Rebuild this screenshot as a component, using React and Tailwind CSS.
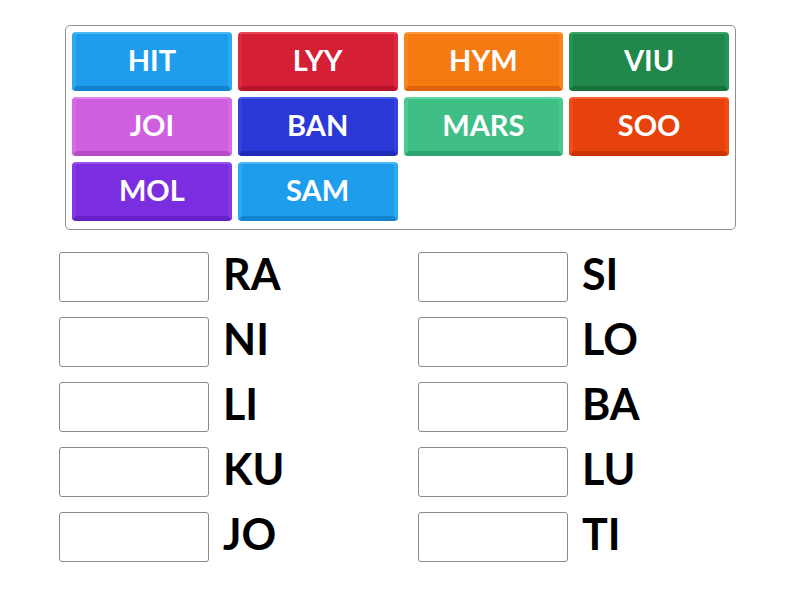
import React from "react";

const tiles = [
  { label: "HIT", face: "bg-[#1f9ded]", top: "border-t-[#4bb8f5]", side: "border-x-[#2aa8f2]", bottom: "border-b-[#1283cf]" },
  { label: "LYY", face: "bg-[#d41f34]", top: "border-t-[#e8475a]", side: "border-x-[#dc2a3e]", bottom: "border-b-[#b5142a]" },
  { label: "HYM", face: "bg-[#f57a12]", top: "border-t-[#fb9a3c]", side: "border-x-[#f7861f]", bottom: "border-b-[#dc640a]" },
  { label: "VIU", face: "bg-[#20884a]", top: "border-t-[#3aa565]", side: "border-x-[#269455]", bottom: "border-b-[#17733c]" },
  { label: "JOI", face: "bg-[#cf5fdf]", top: "border-t-[#e583f2]", side: "border-x-[#d76be6]", bottom: "border-b-[#b54bc6]" },
  { label: "BAN", face: "bg-[#2a38d6]", top: "border-t-[#4a5ae8]", side: "border-x-[#3342df]", bottom: "border-b-[#1e2bb5]" },
  { label: "MARS", face: "bg-[#3fbf86]", top: "border-t-[#62d8a3]", side: "border-x-[#4ac990]", bottom: "border-b-[#2ea470]" },
  { label: "SOO", face: "bg-[#e8420c]", top: "border-t-[#fb6530]", side: "border-x-[#ef4d16]", bottom: "border-b-[#cc3405]" },
  { label: "MOL", face: "bg-[#7a2ee0]", top: "border-t-[#9852f0]", side: "border-x-[#8338e8]", bottom: "border-b-[#6420c4]" },
  { label: "SAM", face: "bg-[#1f9ded]", top: "border-t-[#4bb8f5]", side: "border-x-[#2aa8f2]", bottom: "border-b-[#1283cf]" },
];

const left = ["RA", "NI", "LI", "KU", "JO"];
const right = ["SI", "LO", "BA", "LU", "TI"];

function Tile({ t }) {
  return (
    <div
      className={`h-[59px] rounded-[4px] border-t-2 border-x-[4px] border-b-[5px] flex items-center justify-center text-white text-[29px] font-bold ${t.face} ${t.top} ${t.side} ${t.bottom}`}
    >
      {t.label}
    </div>
  );
}

function Column({ words }) {
  return (
    <div className="w-[359px] flex flex-col gap-[15px]">
      {words.map((w) => (
        <div key={w} className="flex items-center gap-[14px]">
          <div className="w-[150px] h-[50px] border border-[#8a8a8a] rounded-[3px] bg-white" />
          <span className="text-[43px] font-bold text-black leading-none pb-[7px]">{w}</span>
        </div>
      ))}
    </div>
  );
}

export default function App() {
  return (
    <div
      className="w-[800px] h-[600px] bg-white"
      style={{ fontFamily: "Lato, 'Open Sans', sans-serif" }}
    >
      <div className="pt-[25px] pl-[65px]">
        <div className="w-[671px] h-[205px] border border-[#8f8f8f] rounded-[5px] p-[6px] grid grid-cols-4 gap-[6px] content-start">
          {tiles.map((t) => (
            <Tile key={t.label} t={t} />
          ))}
        </div>
      </div>
      <div className="flex pl-[59px] pt-[22px]">
        <Column words={left} />
        <Column words={right} />
      </div>
    </div>
  );
}
